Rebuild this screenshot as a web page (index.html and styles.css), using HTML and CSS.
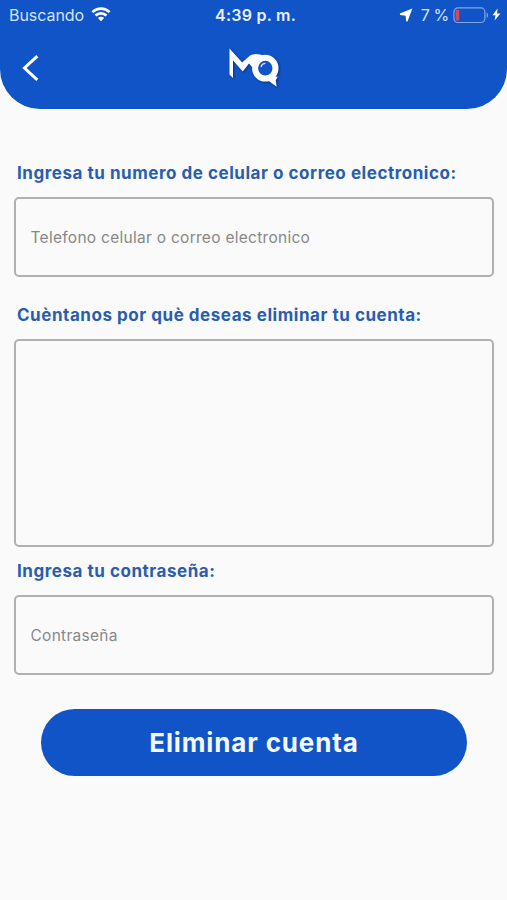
FILE: index.html
```html
<!DOCTYPE html>
<html lang="es">
<head>
<meta charset="utf-8">
<title>Eliminar cuenta</title>
<link rel="stylesheet" href="styles.css">
</head>
<body>
<header class="header">
  <div class="status">
    <div class="status-left">
      <span class="carrier">Buscando</span>
      <svg class="wifi" width="20" height="15" viewBox="0 0 20 15" fill="none" stroke="#fff" stroke-width="2.7">
        <path d="M1.4 5.1a12.4 12.4 0 0 1 17.2 0"/>
        <path d="M4.5 8.5a8 8 0 0 1 11 0"/>
        <path d="M10 14.2 6.9 11a4.4 4.4 0 0 1 6.2 0z" fill="#fff" stroke="none"/>
      </svg>
    </div>
    <span class="clock">4:39 p. m.</span>
    <div class="status-right">
      <svg width="14" height="14" viewBox="0 0 14 14"><path d="M13.4.6.8 5.6l.3 1.3 5.5.8.5 5.6 1.4.2z" fill="#fff"/></svg>
      <span class="percent">7 %</span>
      <svg class="battery" width="37" height="17" viewBox="0 0 37 17" fill="none">
        <rect x=".9" y=".9" width="31" height="14.6" rx="4" stroke="#86a5e6" stroke-width="1.2"/>
        <rect x="2.6" y="2.8" width="3.6" height="10.8" rx="1.4" fill="#d9475b"/>
        <path d="M33.6 5.7c2 .6 2 4.4 0 5z" fill="#86a5e6"/>
      </svg>
      <svg class="bolt" width="9" height="13" viewBox="0 0 9 13"><path d="M5.6.4.5 7.3h3L2.6 12.6 8.4 5.5H5z" fill="#fff"/></svg>
    </div>
  </div>
  <div class="nav">
    <svg class="back" width="18" height="28" viewBox="0 0 18 28" fill="none" stroke="#fff" stroke-width="3"><path d="M16.3 2.2 3.5 14l12.8 11.8"/></svg>
    <svg class="logo" width="54" height="44" viewBox="0 0 54 44">
      <g class="logo-shadow">
        <path d="M2.5 2.5 15.2 16.5 23 9.5Q28 6.5 37 9.5L29 17 25 21 22 17.6 15.8 25.4 6 14.5V32L2.5 28.5z"/>
        <path d="M39 32 50.8 30.5 48.8 34.2 49.6 40.8 42.5 35.5z"/>
        <ellipse cx="38.3" cy="22.2" rx="10.2" ry="10.4" class="ring"/>
        <path d="M34 21c.6-2.2 2.2-3.5 4.5-3.6" class="glint"/>
      </g>
    </svg>
  </div>
</header>
<main class="form">
  <label class="label" for="contact">Ingresa tu numero de celular o correo electronico:</label>
  <input class="field" id="contact" type="text" placeholder="Telefono celular o correo electronico">
  <label class="label label-reason" for="reason">Cuèntanos por què deseas eliminar tu cuenta:</label>
  <textarea class="field area" id="reason"></textarea>
  <label class="label label-password" for="password">Ingresa tu contraseña:</label>
  <input class="field" id="password" type="password" placeholder="Contraseña">
  <button class="submit" type="button">Eliminar cuenta</button>
</main>
</body>
</html>
```
FILE: styles.css
```css
* { box-sizing: border-box; }
body {
  margin: 0;
  min-height: 900px;
  background: #fafafa;
  font-family: Inter, "Liberation Sans", sans-serif;
}
.header {
  height: 108.5px;
  background: #1054c8;
  border-radius: 0 0 40px 40px;
  color: #fff;
}
.status {
  display: grid;
  grid-template-columns: 1fr auto 1fr;
  align-items: center;
  height: 29px;
  padding: 0 6px 0 9px;
}
.status-left, .status-right { display: flex; align-items: center; }
.status-right { justify-content: flex-end; }
.carrier { font-size: 16px; letter-spacing: -.05px; color: #d5e3fb; }
.wifi { margin-left: 7px; }
.clock { padding-left: 1px; font-size: 16px; font-weight: 600; letter-spacing: .25px; color: #e8f0fd; }
.percent { margin-left: 8px; font-size: 16px; letter-spacing: -.3px; color: #d5e3fb; }
.battery { margin: 1px 0 0 4px; }
.bolt { margin-left: 2px; }
.nav {
  display: grid;
  grid-template-columns: 1fr auto 1fr;
  align-items: center;
  height: 78px;
  padding-left: 21px;
  padding-right: 21px;
}
.logo { display: block; }
.logo-shadow { fill: #fff; filter: drop-shadow(1px 1.5px 1px rgba(0, 20, 80, .55)); }
.ring { fill: #1054c8; stroke: #fff; stroke-width: 6; }
.glint { fill: none; stroke: #dbe7ff; stroke-width: 1.3; }
.form {
  display: flex;
  flex-direction: column;
  padding: 53.5px 13px 0 14px;
}
.label {
  padding-left: 3px;
  font-size: 17px;
  line-height: 22px;
  font-weight: 700;
  letter-spacing: .54px;
  color: #285daf;
  white-space: nowrap;
}
.label-reason { margin-top: 26.5px; }
.label-password { margin-top: 13px; }
.field {
  display: block;
  width: 100%;
  height: 80px;
  margin: 13px 0 0;
  padding: 0 14.5px;
  border: 2px solid #b0b0b0;
  border-radius: 5px;
  background: transparent;
  font: 15.5px Inter, "Liberation Sans", sans-serif;
  letter-spacing: .28px;
  resize: none;
  outline: none;
}
.field::placeholder { color: #888; opacity: 1; }
.area { height: 208.5px; }
.submit {
  height: 67px;
  margin: 34px 27px 0;
  border: 0;
  border-radius: 34px;
  background: #1054c8;
  color: #f4f8ff;
  font: 700 26px Inter, "Liberation Sans", sans-serif;
  letter-spacing: .85px;
}
```
